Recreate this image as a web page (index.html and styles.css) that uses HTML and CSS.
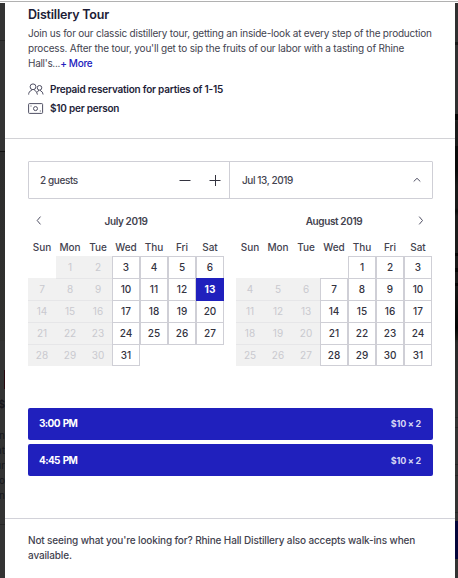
FILE: index.html
```html
<!DOCTYPE html>
<html lang="en">
<head>
<meta charset="utf-8">
<title>Distillery Tour</title>
<link rel="stylesheet" href="styles.css">
</head>
<body>
<div class="backdrop left">
  <i class="seam"></i><i class="photo"></i><i class="tag"></i>
  <span class="peek price">$</span>
  <p class="peek copy">n<br>at<br>ur<br>ro<br>in</p>
  <i class="seam low"></i>
</div>
<main class="modal">
  <section class="intro">
    <h1>Distillery Tour</h1>
    <p class="desc"><span class="l1">Join us for our classic distillery tour, getting an inside-look at every step of the production</span><br><span class="l2">process. After the tour, you'll get to sip the fruits of our labor with a tasting of Rhine</span><br><span class="l3">Hall's...<a>+ More</a></span></p>
    <div class="fact">
      <svg width="16" height="13" viewBox="0 0 16 13"><circle cx="5" cy="3.8" r="2.9"/><path d="M.7 11.6V10.500Q.9 8.200 3.700 7.300L4 6.400M6.200 6.400 6.500 7.300Q9.200 8.200 9.400 11.600"/><circle cx="11.500" cy="4.800" r="2.300"/><path d="M10.600 7v1L9.200 8.800M12.500 7v.8Q15 8.700 15.100 11.500"/></svg>
      <span class="f1">Prepaid reservation for parties of 1-15</span>
    </div>
    <div class="fact">
      <svg width="16" height="13" viewBox="0 0 16 13"><rect x=".6" y="1.600" width="14" height="9.800" rx=".8"/><circle cx="7.500" cy="6.600" r="2"/><path d="M2.500 4h1M11.800 9h1"/></svg>
      <span class="f2">$10 per person</span>
    </div>
  </section>
  <section class="booking">
    <div class="selectors">
      <div class="guests"><span>2 guests</span>
        <svg class="minus" width="12" height="12" viewBox="0 0 12 12"><path d="M.5 6.500h11"/></svg>
        <svg class="plus" width="12" height="12" viewBox="0 0 12 12"><path d="M.5 6.500h11M6.500 1v11"/></svg>
      </div>
      <div class="date"><span>Jul 13, 2019</span>
        <svg width="8" height="6" viewBox="0 0 8 6"><path d="M.7 4.500 4 1.300 7.300 4.500"/></svg>
      </div>
    </div>
    <div class="calendars">
      <div class="month">
        <div class="caption"><svg class="prev" width="6" height="9" viewBox="0 0 6 9"><path d="M4.500 .6 1.200 4.500 4.500 8.400"/></svg><b class="jul">July 2019</b></div>
        <div class="week"><span>Sun</span><span>Mon</span><span>Tue</span><span>Wed</span><span>Thu</span><span>Fri</span><span>Sat</span></div>
        <div class="days">
          <i></i><s>1</s><s>2</s><b>3</b><b>4</b><b>5</b><b>6</b>
          <s class="first">7</s><s>8</s><s>9</s><b>10</b><b>11</b><b>12</b><b class="picked">13</b>
          <s>14</s><s>15</s><s>16</s><b>17</b><b>18</b><b>19</b><b>20</b>
          <s>21</s><s>22</s><s>23</s><b>24</b><b>25</b><b>26</b><b>27</b>
          <s>28</s><s>29</s><s>30</s><b class="last">31</b><i class="under"></i><i class="under"></i><i class="under"></i>
        </div>
      </div>
      <div class="month">
        <div class="caption"><b class="aug">August 2019</b><svg class="next" width="6" height="9" viewBox="0 0 6 9"><path d="M1.200 .6 4.500 4.500 1.200 8.400"/></svg></div>
        <div class="week"><span>Sun</span><span>Mon</span><span>Tue</span><span>Wed</span><span>Thu</span><span>Fri</span><span>Sat</span></div>
        <div class="days">
          <i></i><i></i><i></i><i></i><b>1</b><b>2</b><b>3</b>
          <s class="first">4</s><s class="first">5</s><s class="first">6</s><b>7</b><b>8</b><b>9</b><b>10</b>
          <s>11</s><s>12</s><s>13</s><b>14</b><b>15</b><b>16</b><b>17</b>
          <s>18</s><s>19</s><s>20</s><b>21</b><b>22</b><b>23</b><b>24</b>
          <s>25</s><s>26</s><s>27</s><b class="last">28</b><b class="last">29</b><b class="last">30</b><b class="last">31</b>
        </div>
      </div>
    </div>
    <div class="slot"><span>3:00 PM</span><small>$10 × 2</small></div>
    <div class="slot"><span>4:45 PM</span><small>$10 × 2</small></div>
  </section>
  <footer><span class="w1">Not seeing what you're looking for? Rhine Hall Distillery also accepts walk-ins when</span><br>available.</footer>
</main>
<div class="backdrop right"><i class="bar b1"></i><i class="bar b2"></i><i class="bar b3"></i><i class="bar b4"></i><i class="fields"></i><i class="cta"></i></div>
</body>
</html>
```

FILE: styles.css
```css
* { box-sizing: border-box; }
body {
  margin: 0;
  width: 458px;
  height: 578px;
  overflow: hidden;
  display: grid;
  grid-template-columns: 5px 450px 3px;
  border-top: 1px solid #fff;
  background: #fff;
  font-family: Inter, "Liberation Sans", sans-serif;
  font-size: 10px;
  color: #43434f;
  box-shadow: inset 0 1px #b1b1b1;
}
svg { fill: none; stroke: #505064; stroke-width: 1; flex: none; }
.backdrop { position: relative; overflow: hidden; margin-top: 2px; height: 575px; background: #333; }
.backdrop i { position: absolute; left: 0; right: 0; }
.seam { top: 37px; height: 1px; background: #242424; }
.seam.low { top: 521px; background: #262626; }
.photo { top: 148px; height: 190px; background: linear-gradient(#111 0 1px, #2d2d2d 1px, #31312f); }
.backdrop .tag { top: 367px; height: 19px; left: 4px; background: #26070d; }
.peek { position: absolute; color: #17171c; margin: 0; right: 0; white-space: nowrap; text-align: right; }
.price { top: 394px; font-weight: 700; line-height: 14px; }
.copy { top: 425px; line-height: 15px; }
.right { background: linear-gradient(#303030 0 110px, #1b1b1b 120px, #151515 330px, #292929 340px, #333 420px); }
.b1 { top: 39px; height: 3px; background: #181818; }
.b2 { top: 111px; height: 6px; background: #050505; }
.b3 { top: 143px; height: 110px; background: linear-gradient(#0a0a0a 0 25px, #191919 40px 62px, #0a0a0a 65px, #1c1c1c 70px); }
.b4 { top: 250px; height: 87px; background: linear-gradient(#050505 0 3px, #191919 3px 15px, #050505 15px 19px, #191919 19px 30px, #050505 30px 33px, #171717 33px, #030303 75px, #1a1a14 87px); }
.fields { top: 414px; height: 96px; background: linear-gradient(#262626 0 1px, transparent 1px 10px, #262626 10px 11px, transparent 11px 47px, #262626 47px 48px, transparent 48px 58px, #262626 58px 59px, transparent 59px 95px, #262626 95px); }
.cta { top: 518px; height: 38px; background: #05053a; }

.modal { border-top: 1px solid #b1b1b1; background: #fff; height: 577px; }
.intro { height: 137px; padding: 6px 23px 0; border-bottom: 1px solid #d2d2d6; }
h1 { margin: 0; font-size: 12.5px; line-height: 14px; font-weight: 600; color: #1c1c36; letter-spacing: -.2px; }
.desc { margin: 4px 0 0; line-height: 15px; white-space: nowrap; letter-spacing: -.21px; }
.l2 { letter-spacing: -.19px; }
.l3 { letter-spacing: -.3px; }
.desc a { color: #2020bd; font-weight: 500; }
.fact { display: flex; align-items: center; height: 19px; gap: 6px; font-weight: 600; color: #1e1e38; letter-spacing: -.22px; }
.fact span { position: relative; top: -1px; }
.desc + .fact { margin-top: 9px; }

.booking { height: 380px; padding: 22px 22px 0 23px; border-bottom: 1px solid #d2d2d9; }
.selectors { display: flex; height: 38px; border: 1px solid #cfcfd6; border-radius: 1px; font-weight: 500; letter-spacing: -.4px; }
.guests { display: flex; align-items: center; width: 201px; padding: 0 8px 0 11px; border-right: 1px solid #cfcfd6; }
.guests svg { stroke: #33333f; }
.guests .minus { margin-left: auto; margin-right: 18px; }
.date { flex: 1; display: flex; align-items: center; justify-content: space-between; padding: 0 11px 0 12px; }
.date span { padding-bottom: 1px; }
.calendars { display: flex; gap: 12px; }
.month { width: 196px; }
.caption { display: flex; height: 43px; align-items: center; justify-content: center; position: relative; letter-spacing: -.38px; }
.caption b { font-weight: 600; }
.prev, .next { position: absolute; top: 17px; }
.prev { left: 8px; }
.next { right: 8px; }
.week { display: grid; grid-template-columns: repeat(7, 28px); height: 14px; line-height: 10px; text-align: center; font-weight: 500; }
.days { display: grid; grid-template-columns: repeat(7, 28px); grid-auto-rows: 22px; text-align: center; line-height: 20px; }
.days s { text-decoration: none; color: #c9c9cf; background: #f1f1f1; border-top: 1px solid #e6e6e8; }
.days i + s, .days i + s + s, .days .first { border-color: #f1f1f1; }
.days b { font-weight: 500; color: #33333f; border: 1px solid #cfcfd6; border-bottom: 0; }
.days .last { border-bottom: 1px solid #cfcfd6; line-height: 20px; }
.days .under { border-top: 1px solid #cfcfd6; }
.days .picked { background: #2020bd; border-color: #2020bd; color: #fff; font-weight: 700; box-shadow: 0 1px #2020bd; position: relative; }
.slot { display: flex; align-items: center; justify-content: space-between; height: 32px; padding: 0 12px 2px 11px; border-radius: 2px; background: #2020bd; color: #fff; font-weight: 700; letter-spacing: -.6px; word-spacing: 1px; }
.slot small { font-size: 9px; color: #d5d5f3; letter-spacing: -.25px; word-spacing: 0; }
.calendars + .slot { margin-top: 42px; }
.slot + .slot { margin-top: 4px; padding-bottom: 0; }
footer { padding: 14px 23px 0; line-height: 15px; font-weight: 500; white-space: nowrap; letter-spacing: -.14px; }
```
